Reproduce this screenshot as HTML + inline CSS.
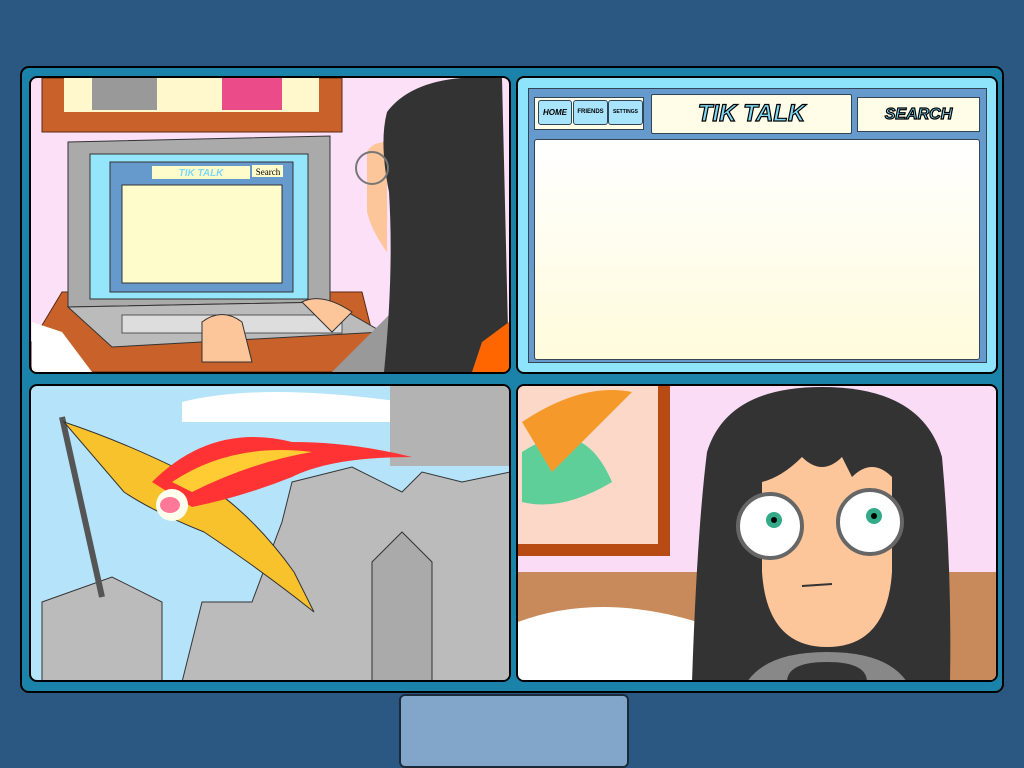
<!DOCTYPE html>
<html><head><meta charset="utf-8"><style>
body{margin:0;width:1024px;height:768px;background:#2b5883;position:relative;overflow:hidden;font-family:"Liberation Sans",sans-serif}
.frame{position:absolute;left:20px;top:66px;width:980px;height:623px;background:#1b83aa;border:2px solid #000;border-radius:9px}
.p{position:absolute;border:2px solid #000;border-radius:8px;overflow:hidden}
.btn{position:absolute;left:399px;top:694px;width:226px;height:70px;background:#82a6ca;border:2px solid #1a2a3a;border-radius:6px}
.tt{font-family:"Liberation Sans",sans-serif;font-weight:bold;font-style:italic;color:#7fd8f5;-webkit-text-stroke:1.2px #000}
</style></head><body>
<div class="frame"></div>

<!-- TL -->
<div class="p" style="left:29px;top:76px;width:478px;height:294px;background:#fbe0f8">
<svg width="478" height="294" viewBox="29 76 478 294" style="display:block">
<rect x="40" y="76" width="300" height="54" fill="#c8622a" stroke="#5a2a10"/>
<rect x="62" y="76" width="255" height="34" fill="#fff8cc"/>
<rect x="90" y="76" width="65" height="32" fill="#999"/>
<rect x="220" y="76" width="60" height="32" fill="#ec4b8a"/>
<polygon points="30,340 60,290 360,290 380,370 30,370" fill="#c8622a" stroke="#5a2a10"/>
<polygon points="30,320 60,330 90,370 30,370" fill="#fff"/>
<polygon points="66,140 328,134 328,300 66,305" fill="#aaa" stroke="#333"/>
<rect x="88" y="152" width="218" height="145" fill="#95e6fb" stroke="#333"/>
<rect x="108" y="160" width="183" height="130" fill="#6699cc" stroke="#333"/>
<rect x="120" y="183" width="160" height="98" fill="#fffccc" stroke="#333"/>
<rect x="150" y="164" width="98" height="13" fill="#fffccc"/>
<text x="199" y="174" font-size="10" text-anchor="middle" class="tt" fill="#7fd8f5">TIK TALK</text>
<rect x="250" y="163" width="31" height="12" fill="#fffccc"/>
<text x="266" y="173" font-size="9" font-family="Liberation Serif" text-anchor="middle">Search</text>
<polygon points="66,305 328,300 380,330 110,345" fill="#bbb" stroke="#333"/>
<rect x="120" y="313" width="220" height="18" fill="#ddd" stroke="#555"/>
<path d="M200,320 q20,-15 40,0 l10,40 l-50,0z M300,300 q20,-10 50,10 l-20,20z" fill="#fdc59a" stroke="#333"/>
<path d="M365,150 q5,-10 20,-10 l0,110 q-15,-20 -20,-40z" fill="#fdc59a"/>
<path d="M330,370 l60,-60 60,0 0,60z" fill="#999"/>
<path d="M385,110 q30,-40 115,-34 l7,294 l-125,0 q10,-100 5,-180 q-10,-50 -2,-80z" fill="#333"/>
<polygon points="480,340 507,320 507,370 470,370" fill="#f60"/>
<circle cx="370" cy="166" r="16" fill="none" stroke="#777" stroke-width="2"/>
</svg></div>

<!-- TR -->
<div class="p" style="left:516px;top:76px;width:478px;height:294px;background:#8ee5fb">
<div style="position:absolute;left:10px;top:10px;width:457px;height:273px;background:#6699cc;border:1px solid #345"></div>
<div style="position:absolute;left:16px;top:19px;width:108px;height:31px;background:#fffde8;border:1px solid #345"></div>
<div style="position:absolute;left:20px;top:22px;width:32px;height:23px;background:#a8e4fb;border:1px solid #345;border-radius:3px;font-size:8px;font-weight:bold;font-style:italic;line-height:23px;text-align:center">HOME</div>
<div style="position:absolute;left:55px;top:22px;width:33px;height:23px;background:#a8e4fb;border:1px solid #345;border-radius:3px;font-size:6px;font-weight:bold;line-height:23px;text-align:center">FRIENDS</div>
<div style="position:absolute;left:90px;top:22px;width:33px;height:23px;background:#a8e4fb;border:1px solid #345;border-radius:3px;font-size:5px;font-weight:bold;line-height:23px;text-align:center">SETTINGS</div>
<div style="position:absolute;left:133px;top:16px;width:199px;height:38px;background:#fffde8;border:1px solid #345;border-radius:2px;text-align:center;line-height:38px;font-size:24px" class="tt">TIK TALK</div>
<div style="position:absolute;left:339px;top:19px;width:121px;height:33px;background:#fffde8;border:1px solid #345;text-align:center;line-height:33px;font-size:16px" class="tt">SEARCH</div>
<div style="position:absolute;left:16px;top:61px;width:444px;height:219px;background:linear-gradient(#fff,#fffbdc);border:1px solid #345;border-radius:3px"></div>
</div>

<!-- BL -->
<div class="p" style="left:29px;top:384px;width:478px;height:294px;background:#b5e4fa">
<svg width="478" height="294" viewBox="29 384 478 294" style="display:block">
<path d="M180,400 q80,-20 220,0 l0,20 -220,0z" fill="#fff"/>
<rect x="388" y="384" width="120" height="80" fill="#b3b3b3"/>
<polygon points="290,480 350,465 400,490 420,470 460,480 508,470 508,680 180,680 200,600 250,600 280,520" fill="#bbb" stroke="#333"/>
<polygon points="40,600 110,575 160,600 160,680 40,680" fill="#bbb" stroke="#333"/>
<polygon points="370,560 400,530 430,560 430,680 370,680" fill="#aaa" stroke="#333"/>
<line x1="60" y1="415" x2="100" y2="595" stroke="#555" stroke-width="6"/>
<path d="M62,420 q60,20 120,50 q60,30 110,100 q10,20 20,40 q-50,-40 -110,-80 q-50,-20 -80,-40z" fill="#f8c22c" stroke="#333"/>
<path d="M150,480 q60,-60 140,-40 q60,0 120,15 q-80,0 -120,20 q-50,20 -100,30z" fill="#f33"/>
<path d="M170,480 q60,-40 140,-30 q-60,10 -120,40z" fill="#fc3"/>
<circle cx="170" cy="503" r="16" fill="#ffe"/>
<ellipse cx="168" cy="503" rx="10" ry="8" fill="#f79"/>
</svg></div>

<!-- BR -->
<div class="p" style="left:516px;top:384px;width:478px;height:294px;background:#fbdcf7">
<svg width="478" height="294" viewBox="516 384 478 294" style="display:block">
<rect x="516" y="384" width="152" height="170" fill="#b84a14"/>
<rect x="516" y="384" width="140" height="158" fill="#fcd8c8"/>
<path d="M520,450 q60,-40 90,30 q-50,30 -90,20z" fill="#5fcf9a"/>
<path d="M520,420 q60,-40 110,-30 q-40,40 -80,80z" fill="#f59a2a"/>
<rect x="516" y="570" width="478" height="110" fill="#c88a5a"/>
<path d="M516,620 q80,-30 180,0 l0,60 -180,0z" fill="#fff"/>
<path d="M690,680 q5,-150 15,-230 q20,-65 115,-65 q100,0 120,70 q10,110 8,225z" fill="#333"/>
<path d="M760,480 l0,90 q5,75 65,75 q60,0 65,-75 l0,-95 q-20,-20 -40,0 l-10,-20 q-20,20 -40,0 q-20,20 -40,25z" fill="#fdc59a"/>
<path d="M745,680 q20,-30 80,-30 q60,0 80,30z" fill="#888"/>
<path d="M785,680 q0,-20 40,-20 q40,0 40,20z" fill="#333"/>
<circle cx="768" cy="524" r="32" fill="#fff" stroke="#666" stroke-width="4"/>
<circle cx="868" cy="520" r="32" fill="#fff" stroke="#666" stroke-width="4"/>
<circle cx="772" cy="518" r="8" fill="#3a8"/><circle cx="872" cy="514" r="8" fill="#3a8"/>
<circle cx="772" cy="518" r="3" fill="#000"/><circle cx="872" cy="514" r="3" fill="#000"/>
<line x1="800" y1="584" x2="830" y2="582" stroke="#333" stroke-width="2"/>
</svg></div>

<div class="btn"></div>
</body></html>
